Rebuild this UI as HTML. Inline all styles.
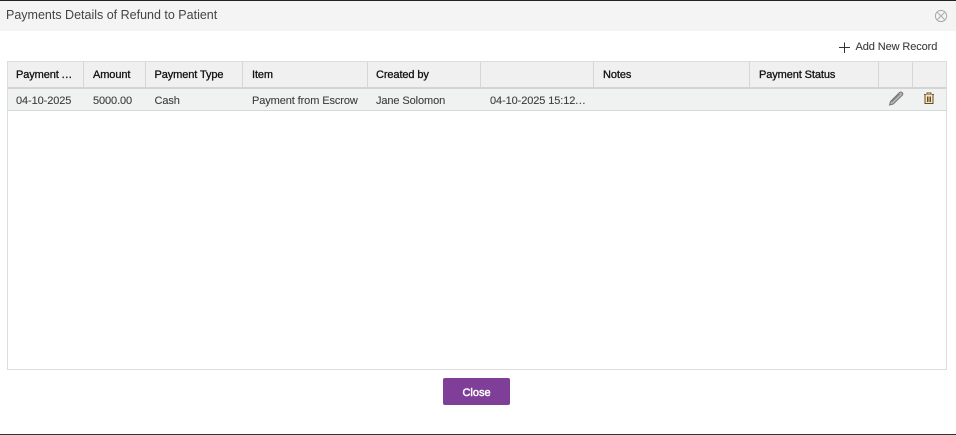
<!DOCTYPE html>
<html><head><meta charset="utf-8">
<style>
html,body{margin:0;padding:0;background:#fff;}
body{width:956px;height:435px;position:relative;overflow:hidden;font-family:"Liberation Sans",sans-serif;font-size:11px;color:#444;}
div,span{position:absolute;box-sizing:border-box;}
.t{white-space:nowrap;line-height:14px;letter-spacing:-.1px;}
.t i{font-style:normal;letter-spacing:.5px;}
.h{color:#111;top:67.5px;-webkit-text-stroke:.3px #111;}
.c{top:93.5px;color:#3d3d3d;-webkit-text-stroke:.1px #3d3d3d;}
.v{top:62px;width:1px;height:25px;background:#d6d6d6;}
</style></head><body>
<div style="left:0;top:0;width:956px;height:1px;background:#222"></div>
<div style="left:0;top:434px;width:956px;height:1px;background:#333"></div>
<div style="left:0;top:1px;width:956px;height:30px;background:#f4f4f4"></div>
<div class="t" style="left:6px;top:7px;font-size:12.5px;line-height:16px;color:#444;letter-spacing:0">Payments Details of Refund to Patient</div>
<svg style="position:absolute;left:934px;top:9px" width="14" height="14" viewBox="0 0 14 14" fill="none" stroke="#aaa" stroke-width="1"><circle cx="7" cy="7" r="5.6"/><path d="M3.5 3.5L10.5 10.5M10.5 3.5L3.5 10.5"/></svg>

<svg style="position:absolute;left:838px;top:41px" width="13" height="13" viewBox="0 0 13 13" fill="none" stroke="#333" stroke-width="1"><path d="M6.5 1.5V12M1 6.5H12"/></svg>
<div class="t" style="left:855.5px;top:39.5px;color:#3d3d3d;-webkit-text-stroke:.1px #3d3d3d">Add New Record</div>

<div style="left:7px;top:61px;width:940px;height:309px;border:1px solid #dcdcdc;background:#fff"></div>
<div style="left:8px;top:62px;width:938px;height:25px;background:#f0f0f0"></div>
<div style="left:8px;top:87px;width:938px;height:2px;background:#d4d4d4"></div>
<div style="left:8px;top:89px;width:938px;height:21px;background:#f0f1f1"></div>
<div style="left:8px;top:110px;width:938px;height:1px;background:#d8d8d8"></div>

<div class="v" style="left:83px"></div>
<div class="v" style="left:145px"></div>
<div class="v" style="left:242px"></div>
<div class="v" style="left:367px"></div>
<div class="v" style="left:480px"></div>
<div class="v" style="left:593px"></div>
<div class="v" style="left:749px"></div>
<div class="v" style="left:878px"></div>
<div class="v" style="left:912px"></div>

<div class="t h" style="left:16px">Payment <i>...</i></div>
<div class="t h" style="left:93px">Amount</div>
<div class="t h" style="left:154.5px">Payment Type</div>
<div class="t h" style="left:252px">Item</div>
<div class="t h" style="left:376px">Created by</div>
<div class="t h" style="left:603px">Notes</div>
<div class="t h" style="left:759px">Payment Status</div>

<div class="t c" style="left:16px">04-10-2025</div>
<div class="t c" style="left:93px">5000.00</div>
<div class="t c" style="left:154.5px">Cash</div>
<div class="t c" style="left:252px">Payment from Escrow</div>
<div class="t c" style="left:376px">Jane Solomon</div>
<div class="t c" style="left:490px">04-10-2025 15:12<i>...</i></div>

<svg style="position:absolute;left:888px;top:91px" width="16" height="15" viewBox="0 0 16 15" fill="none"><path d="M1.5 14L2.5 10.5L11.5 1.5C12.5 .8 13.5 .8 14.3 1.7C15 2.6 15 3.4 14.3 4.2L5.2 13Z" fill="#b5b5b5" stroke="#777" stroke-width="1"/><path d="M3.5 10.8L11.5 3" stroke="#777" stroke-width="1"/></svg>
<svg style="position:absolute;left:923px;top:92px" width="12" height="12" viewBox="0 0 12 12" fill="none" stroke="#6b4a1e" stroke-width="1"><path d="M1 2.5H11M4 2.5V1H8V2.5"/><path d="M2 2.5V11.5H10V2.5" fill="#f3e7c9"/><path d="M4.5 4.5V10M6 4.5V10M7.5 4.5V10"/></svg>

<div style="left:443px;top:378px;width:67px;height:27px;background:#7f3f98;border-radius:2px"></div>
<div class="t" style="left:443px;top:385.5px;width:67px;text-align:center;color:#fff;-webkit-text-stroke:.45px #fff;letter-spacing:0">Close</div>
</body></html>
